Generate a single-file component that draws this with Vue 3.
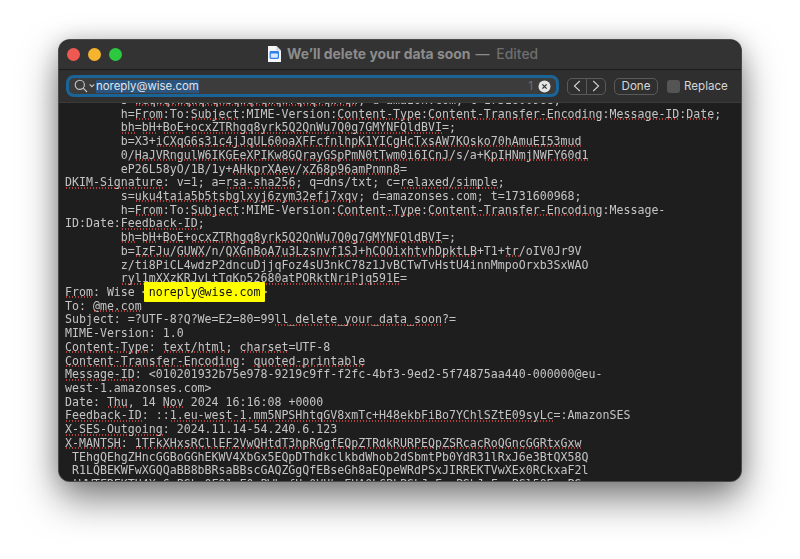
<script setup>
const raw = [
  '        s={wdqwqfwqwqfqhbqwqfqwqwfqhqfqwfqw}; d=amazon.com; t=1731600968;',
  '        h={From}:To:{Subject}:MIME-Version:{Content-Type}:{Content-Transfer-Encoding}:{Message-ID}:{Date};',
  '        {bh}={bH}+{BoE}+{ocxZTRhgq8yrk5Q2QnWu7Q0g7GMYNFQldBVI}=;',
  '        b=X3+{iCXqG6s31c4jJqUL60oaXFFcfnlhpK1YICgHcTxsAW7KOsko70hAmuEI53mud}',
  '        0/{HaJVRngulW6IKGEeXPIKw8GQrayGSpPmN0tTwm0i6ICnJ}/s/a+{KpIHNmjNWFY60d1}',
  '        eP26L58yO/1B/1y+{AHkprXAev}/{xZ68p96amPnmn8}=',
  '{DKIM-Signature}: v=1; a={rsa-sha256}; q=dns/txt; c={relaxed/simple};',
  '        s={uku4taia5b5tsbglxyj6zym32efj7xqv}; d=amazonses.com; t=1731600968;',
  '        h={From}:To:{Subject}:MIME-Version:{Content-Type}:{Content-Transfer-Encoding}:Message-',
  'ID:Date:{Feedback-ID};',
  '        {bh}={bH}+{BoE}+{ocxZTRhgq8yrk5Q2QnWu7Q0g7GMYNFQldBVI}=;',
  '        b={IzFJu}/{GUWX}/n/{QXGnBoA7u3Lzsnvf1SJ}+{hCOOixhtvhDpktLB}+T1+{tr}/oIV0Jr9V',
  '        z/ti8PiCL4wdzP2dncuDjjqFoz4sU3nkC78z1JvBCTwTvHstU4innMmpoOrxb3SxWAO',
  '        {ryl1mXXzKRJyLtTgKp52680atPORktNriPjq591E}=',
  '{From}: Wise <[noreply@wise.com]>',
  'To: {@me.com}',
  'Subject: =?UTF-8?Q?We=E2=80=99{ll_delete_your_data_soon}?=',
  'MIME-Version: 1.0',
  '{Content-Type}: {text/html}; {charset}=UTF-8',
  '{Content-Transfer-Encoding}: {quoted-printable}',
  '{Message-ID}: <010201932b75e978-9219c9ff-f2fc-4bf3-9ed2-5f74875aa440-000000@eu-',
  'west-1.amazonses.com>',
  'Date: {Thu}, 14 {Nov} 2024 16:16:08 +0000',
  '{Feedback-ID}: ::{1.eu-west-1.mm5NPSHhtqGV8xmTc+H48ekbFiBo7YChlSZtE09syLc}=:AmazonSES',
  '{X-SES-Outgoing}: 2024.11.14-54.240.6.123',
  '{X-MANTSH}: {1TFkXHxsRCllEF2VwQHtdT3hpRGgfEQpZTRdkRURPEQpZSRcacRoQGncGGRtxGxw}',
  ' TEhgQEhgZHncGGBoGGhEKWV4XbGx5EQpDThdkclkbdWhob2dSbmtPb0YdR31lRxJ6e3BtQX58Q',
  ' R1LQBEKWFwXGQQaBB8bBRsaBBscGAQZGgQfEBseGh8aEQpeWRdPSxJIRREKTVwXEx0RCkxaF2l',
  ' tWWTFRFKTU4X-6-PSLxOF91-F0-PWLxfUz0VUkxFUA0LCPLPSLJvFxxPSLJvFxxPSl5QExxPS'
]
const lines = raw.map((line) =>
  line
    .split(/(\{[^}]*\}|\[[^\]]*\])/)
    .filter(Boolean)
    .map((part) => {
      if (part[0] === '{') return { text: part.slice(1, -1), cls: 'miss' }
      if (part[0] === '[') return { text: part.slice(1, -1), cls: 'hit' }
      return { text: part, cls: '' }
    })
)
</script>

<template>
  <div class="stage">
    <div class="window">
      <header class="titlebar">
        <div class="lights">
          <span class="light red"></span>
          <span class="light yellow"></span>
          <span class="light green"></span>
        </div>
        <div class="title">
          <svg class="doc" width="14" height="16" viewBox="0 0 14 16">
            <path d="M1 0h8.5L14 4.5V16H1z" fill="#f4f6fa" />
            <path d="M9.5 0L14 4.5H9.5z" fill="#c9d3e0" />
            <rect x="2.6" y="5" width="9.4" height="8" rx="1.4" fill="#2f80e8" />
            <rect x="3.8" y="7.6" width="7" height="4.2" rx=".8" fill="#dbe9fb" />
          </svg>
          <span class="name">We’ll delete your data soon</span>
          <span class="dash">—</span>
          <span class="edited">Edited</span>
        </div>
      </header>
      <div class="findbar">
        <div class="field">
          <svg class="glass" width="22" height="14" viewBox="0 0 22 14" fill="none" stroke="#c8c8c8" stroke-width="1.1">
            <circle cx="5.8" cy="5.8" r="4.6" />
            <path d="M9.2 9.2L13 13" />
            <path d="M15.6 5.4l2.3 2.3 2.3-2.3" />
          </svg>
          <span class="query">noreply@wise.com</span>
          <span class="count">1</span>
          <svg class="clear" width="13" height="13" viewBox="0 0 13 13">
            <circle cx="6.5" cy="6.5" r="6" fill="#e4e4e4" />
            <path d="M4.4 4.4l4.2 4.2M8.6 4.4l-4.2 4.2" stroke="#333" stroke-width="1.3" />
          </svg>
        </div>
        <div class="steppers">
          <button class="step">
            <svg width="8" height="12" viewBox="0 0 8 12" fill="none" stroke="#d0d0d0" stroke-width="1.1"><path d="M6.8 1L1.4 6l5.4 5" /></svg>
          </button>
          <button class="step">
            <svg width="8" height="12" viewBox="0 0 8 12" fill="none" stroke="#d0d0d0" stroke-width="1.1"><path d="M1.2 1l5.4 5-5.4 5" /></svg>
          </button>
        </div>
        <button class="done">Done</button>
        <span class="check"></span>
        <span class="replace">Replace</span>
      </div>
      <div class="body">
        <div class="text">
          <div v-for="(line, i) in lines" :key="i" class="line"><span v-for="(seg, j) in line" :key="j" :class="seg.cls">{{ seg.text }}</span></div>
        </div>
      </div>
    </div>
  </div>
</template>

<style>
html, body { margin: 0; background: #fff; }
</style>

<style scoped>
.stage {
  width: 800px;
  height: 559px;
  box-sizing: border-box;
  padding: 40px 59px 0;
  overflow: hidden;
  background: #fff;
}
.window {
  height: 441px;
  border-radius: 11px;
  overflow: hidden;
  background: #1e1e1e;
  display: flex;
  flex-direction: column;
  box-shadow: 0 0 0 1px #4a4a4a, 0 18px 38px rgba(0, 0, 0, 0.5), 0 0 22px rgba(0, 0, 0, 0.18);
}
.titlebar {
  height: 29px;
  flex: none;
  display: flex;
  align-items: center;
  position: relative;
  background: #333333;
  border-bottom: 1px solid #1c1c1c;
}
.lights {
  display: flex;
  gap: 8px;
  padding-left: 8px;
  position: absolute;
  left: 0;
  top: 8px;
}
.light {
  width: 13px;
  height: 13px;
  border-radius: 50%;
}
.red { background: #ee5a52; }
.yellow { background: #f5b32e; }
.green { background: #2cc840; }
.title {
  margin-left: 208px;
  margin-top: -2px;
  display: flex;
  align-items: center;
  font-family: Inter, "Noto Sans", sans-serif;
  font-size: 13.9px;
  color: #8c8c8c;
  white-space: nowrap;
}
.doc { margin-right: 6px; }
.name { font-weight: 700; }
.dash { margin-left: 5px; font-weight: 500; }
.edited { margin-left: 7px; color: #6f6f6f; font-weight: 500; }
.findbar {
  height: 33px;
  flex: none;
  box-sizing: border-box;
  background: #2f2f2f;
  border-bottom: 1px solid #3a3a3a;
  display: flex;
  align-items: center;
  padding: 0 0 0 7px;
  font-family: Inter, "Noto Sans", sans-serif;
  color: #d6d6d6;
  font-size: 11.6px;
}
.field {
  width: 493px;
  height: 22px;
  box-sizing: border-box;
  border: 3px solid #1b6498;
  border-radius: 8px;
  background: #3c3c3c;
  display: flex;
  align-items: center;
  padding: 0 5px 0 5px;
}
.glass { flex: none; margin-right: 0; }
.query {
  background: #2a5580;
  color: #e4e4e4;
  font-size: 11.4px;
  line-height: 13px;
}
.count { margin-left: auto; color: #6d6d6d; margin-right: 5px; }
.clear { flex: none; }
.steppers {
  display: flex;
  margin-left: 8px;
  width: 39px;
  height: 17px;
  box-sizing: border-box;
  border: 1px solid #5a5a5a;
  border-radius: 5px;
}
.step {
  flex: 1;
  padding: 0;
  border: 0;
  background: transparent;
  display: flex;
  align-items: center;
  justify-content: center;
}
.step + .step { border-left: 1px solid #5a5a5a; }
.done {
  margin-left: 8px;
  width: 44px;
  height: 17px;
  padding: 0;
  box-sizing: border-box;
  border: 1px solid #5a5a5a;
  border-radius: 5px;
  background: transparent;
  color: #d6d6d6;
  font: inherit;
}
.check {
  width: 13px;
  height: 13px;
  margin-left: 9px;
  border-radius: 3px;
  background: #555;
}
.replace { margin-left: 4px; }
.body {
  flex: 1;
  min-height: 0;
  overflow: hidden;
  background: #1e1e1e;
  padding-left: 6px;
}
.text {
  margin-top: -9.1px;
  font-family: "DejaVu Sans Mono", monospace;
  font-size: 11.6px;
  line-height: 13.73px;
  color: #c4c4c4;
  filter: blur(0.25px);
}
.line {
  white-space: pre;
  height: 13.73px;
}
.miss {
  background-image: radial-gradient(circle at center, #b8403c 0.75px, transparent 1px);
  background-repeat: repeat-x;
  background-size: 3px 2px;
  background-position: 0 calc(100% - 0.6px);
}
.hit {
  position: relative;
  z-index: 0;
  color: #111;
}
.hit::before {
  content: "";
  position: absolute;
  z-index: -1;
  left: -5px;
  right: -5px;
  top: -3px;
  bottom: -3px;
  background: #ffff00;
  border-radius: 1px;
}
</style>
